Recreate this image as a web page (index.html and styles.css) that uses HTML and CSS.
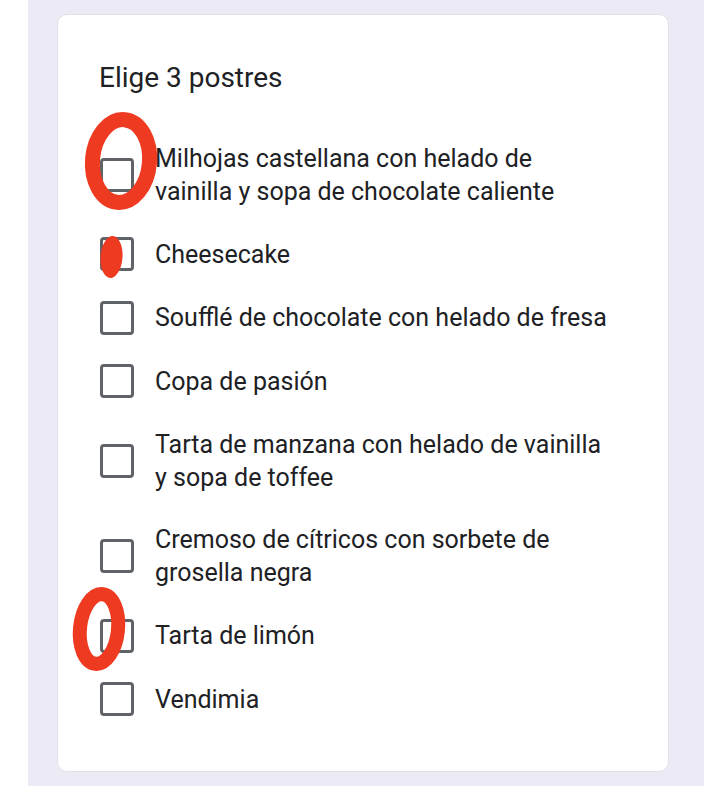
FILE: index.html
```html
<!DOCTYPE html>
<html lang="es">
<head>
<meta charset="utf-8">
<title>Elige 3 postres</title>
<link rel="stylesheet" href="styles.css">
</head>
<body>
<div class="page">
  <div class="card">
    <h1 class="title">Elige 3 postres</h1>
    <ul class="options">
      <li class="option"><span class="box"></span><span class="label">Milhojas castellana con helado de vainilla y sopa de chocolate caliente</span></li>
      <li class="option"><span class="box"></span><span class="label">Cheesecake</span></li>
      <li class="option"><span class="box"></span><span class="label">Soufflé de chocolate con helado de fresa</span></li>
      <li class="option"><span class="box"></span><span class="label">Copa de pasión</span></li>
      <li class="option"><span class="box"></span><span class="label">Tarta de manzana con helado de vainilla y sopa de toffee</span></li>
      <li class="option"><span class="box"></span><span class="label">Cremoso de cítricos con sorbete de grosella negra</span></li>
      <li class="option"><span class="box"></span><span class="label">Tarta de limón</span></li>
      <li class="option"><span class="box"></span><span class="label">Vendimia</span></li>
    </ul>
  </div>
</div>
<svg class="marks" width="720" height="786" viewBox="0 0 720 786" xmlns="http://www.w3.org/2000/svg">
  <ellipse cx="121" cy="161" rx="28.5" ry="41.5" fill="none" stroke="#ee3a20" stroke-width="15" transform="rotate(5 121 161)"/>
  <ellipse cx="111.5" cy="257" rx="11" ry="21" fill="#ee3a20" transform="rotate(4 111.5 257)"/>
  <ellipse cx="99" cy="629" rx="19" ry="35" fill="none" stroke="#ee3a20" stroke-width="14" transform="rotate(6 99 629)"/>
</svg>
</body>
</html>
```

FILE: styles.css
```css
html, body {
  margin: 0;
  padding: 0;
  background: #ffffff;
}

body {
  width: 720px;
  height: 786px;
  overflow: hidden;
  position: relative;
  font-family: Roboto, "Noto Sans", "Liberation Sans", sans-serif;
  color: #202124;
}

.page {
  margin-left: 28px;
  width: 676px;
  height: 786px;
  background: #ecebf5;
  padding: 14px 0 0 29px;
  box-sizing: border-box;
}

.card {
  width: 612px;
  height: 758px;
  box-sizing: border-box;
  background: #ffffff;
  border: 1px solid #e1e0e8;
  border-radius: 10px;
  padding: 45px 0 0 41px;
}

.title {
  margin: 0;
  font-size: 28px;
  line-height: 36px;
  font-weight: 400;
  color: #202124;
}

.options {
  list-style: none;
  margin: 31px 0 0 0;
  padding: 0;
}

.option {
  display: flex;
  align-items: center;
  padding: 14.75px 0;
}

.box {
  flex: none;
  width: 34px;
  height: 34px;
  box-sizing: border-box;
  border: 3px solid #5f6368;
  border-radius: 4px;
  margin-left: 1px;
  margin-right: 21px;
}

.label {
  font-size: 25px;
  line-height: 33px;
  max-width: 458px;
  color: #202124;
}

.marks {
  position: absolute;
  top: 0;
  left: 0;
  pointer-events: none;
}
```
